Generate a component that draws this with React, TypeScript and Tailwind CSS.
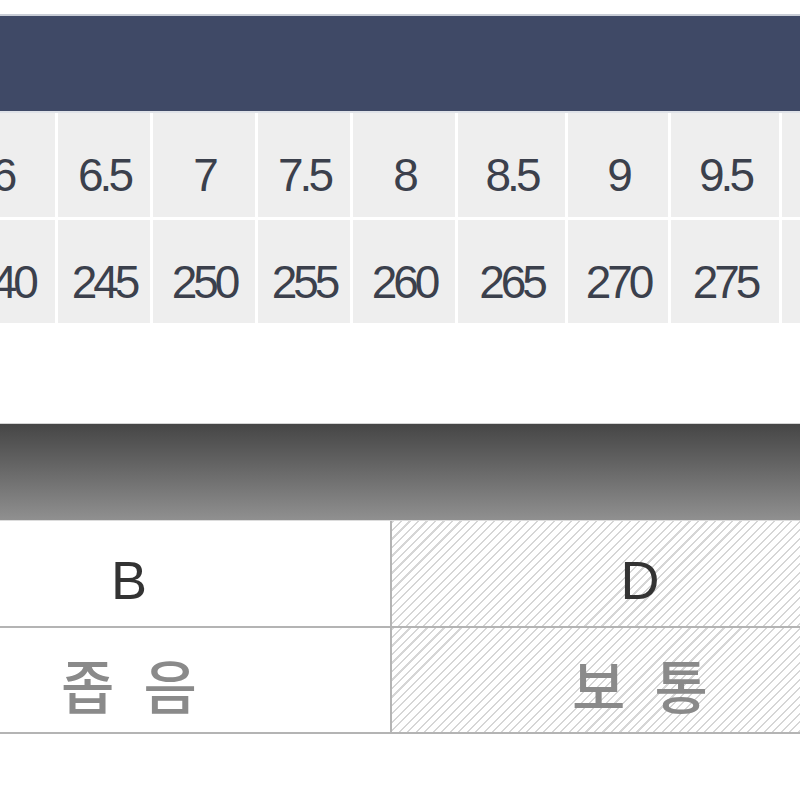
import React from "react";

const sizes = [
  { w: 105, a: "6", b: "240" },
  { w: 92, a: "6.5", b: "245" },
  { w: 102, a: "7", b: "250" },
  { w: 92, a: "7.5", b: "255" },
  { w: 102, a: "8", b: "260" },
  { w: 107, a: "8.5", b: "265" },
  { w: 100, a: "9", b: "270" },
  { w: 108, a: "9.5", b: "275" },
  { w: 108, a: "10", b: "280" },
];

function Cell({ w, text, h }: { w: number; text: string; h: number }) {
  return (
    <div
      className="shrink-0 bg-[#eeeeee] flex items-center justify-center pt-[20px] text-[46px] tracking-[-4px] text-[#3b404c] leading-none"
      style={{ width: w, height: h, fontFamily: '"Liberation Sans", Arial, sans-serif' }}
    >
      {text}
    </div>
  );
}

const hatch =
  "bg-[image:repeating-linear-gradient(135deg,#d6d6d6_0px,#d6d6d6_1.5px,#ffffff_1.5px,#ffffff_6px)]";

export default function App() {
  return (
    <div className="w-[800px] h-[800px] bg-white overflow-hidden">
      <div className="h-[14px] bg-white" />
      <div className="h-[2px] bg-[#c9cdd6]" />
      <div className="h-[95px] bg-[#3f4966]" />
      <div className="h-[2px] bg-[#dfe2e8]" />
      <div className="flex gap-[3px] ml-[-50px]">
        {sizes.map((s, i) => (
          <Cell key={i} w={s.w} text={s.a} h={104} />
        ))}
      </div>
      <div className="h-[3px]" />
      <div className="flex gap-[3px] ml-[-50px]">
        {sizes.map((s, i) => (
          <Cell key={i} w={s.w} text={s.b} h={103} />
        ))}
      </div>
      <div className="h-[100px]" />
      <div className="h-[1px] bg-[#d4d4d4]" />
      <div className="h-[96px] bg-gradient-to-b from-[#464646] to-[#909090]" />
      <div className="h-[1px] bg-[#dcdcdc]" />
      <div
        className="flex ml-[-132px] border-b-[2px] border-[#b4b4b4]"
        style={{ fontFamily: '"Liberation Sans", Arial, sans-serif' }}
      >
        <div className="w-[524px] h-[105px] shrink-0 border-r-[2px] border-[#b4b4b4] bg-white flex items-center justify-center pt-[12px] text-[54px] text-[#333333] leading-none">
          B
        </div>
        <div className={`w-[496px] h-[105px] shrink-0 ${hatch} flex items-center justify-center pt-[12px] text-[54px] text-[#333333] leading-none`}>
          D
        </div>
      </div>
      <div
        className="flex ml-[-132px] border-b-[2px] border-[#b4b4b4]"
        style={{ fontFamily: '"Noto Sans CJK KR", "Noto Sans", sans-serif' }}
      >
        <div className="w-[524px] h-[104px] shrink-0 border-r-[2px] border-[#b4b4b4] bg-white flex items-center justify-center pl-[8px] pt-[8px] text-[58px] font-medium tracking-[8px] text-[#8a8a8a] leading-none">
          좁 음
        </div>
        <div className={`w-[496px] h-[104px] shrink-0 ${hatch} flex items-center justify-center pl-[8px] pt-[8px] text-[58px] font-medium tracking-[8px] text-[#8a8a8a] leading-none`}>
          보 통
        </div>
      </div>
    </div>
  );
}
